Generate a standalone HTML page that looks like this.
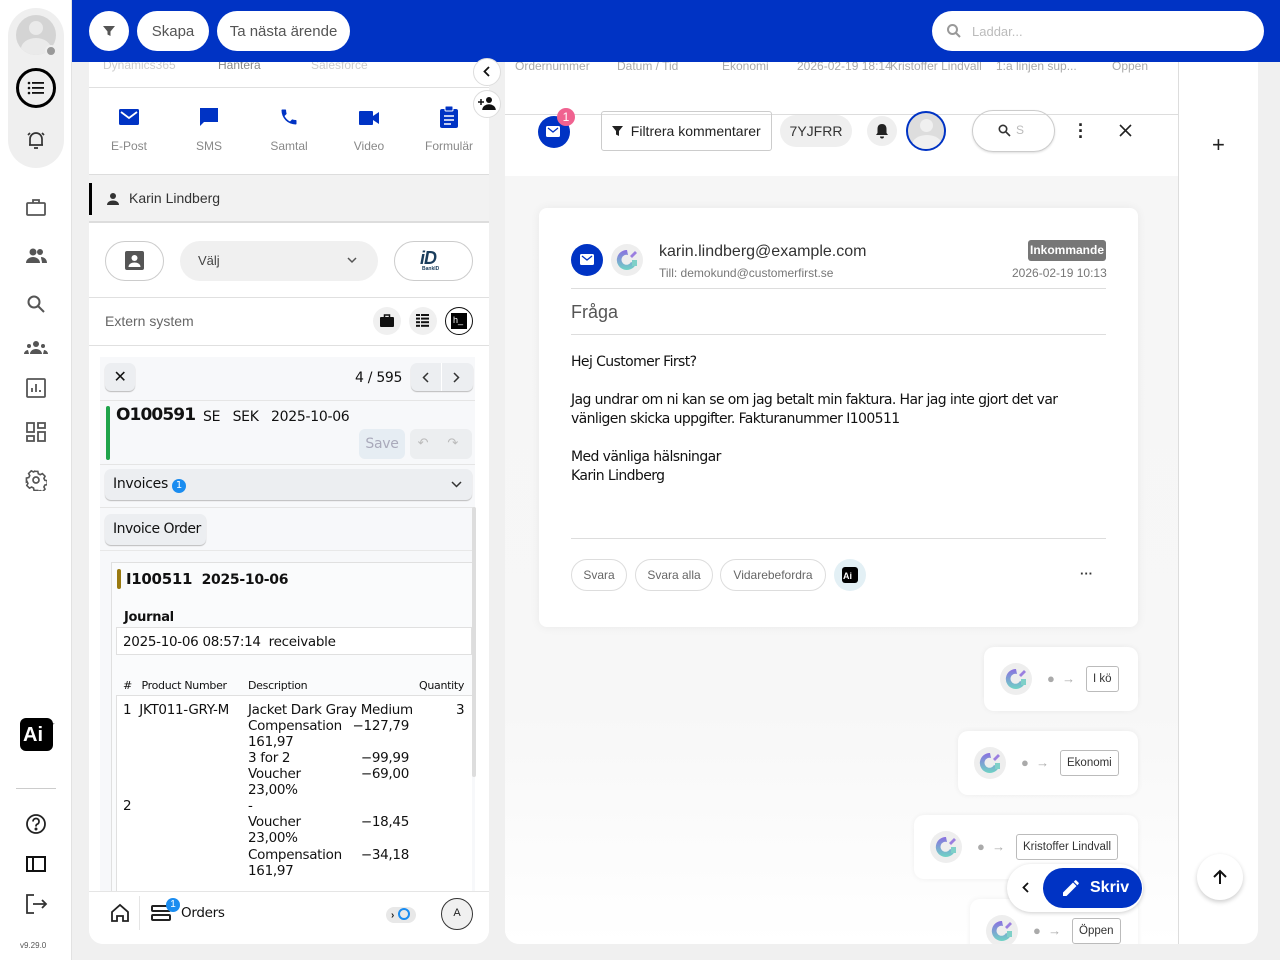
<!DOCTYPE html>
<html><head><meta charset="utf-8"><style>
*{box-sizing:border-box;margin:0;padding:0}
body{width:1280px;height:960px;overflow:hidden;background:#f0f0f0;font-family:"Liberation Sans",Arial,sans-serif;position:relative;color:#222}
.a{position:absolute}
.side{left:0;top:0;width:72px;height:960px;background:#fff;border-right:1px solid #e2e2e2}
.top{left:72px;top:0;width:1208px;height:62px;background:#0033c4}
.pill{position:absolute;background:#fff;border-radius:20px;height:40px;top:11px;display:flex;align-items:center;justify-content:center;font-size:15px;color:#555}
.lp{left:89px;top:62px;width:400px;height:882px;background:#fff;border-radius:0 0 14px 14px;overflow:hidden}
.mp{left:505px;top:62px;width:753px;height:882px;background:#fff;border-radius:0 0 14px 14px;overflow:hidden}
.lab{font-size:12px;color:#888;position:absolute;width:80px;text-align:center}
.mono{font-family:"DejaVu Sans",sans-serif;letter-spacing:-.3px}
.btn{position:absolute;background:#eceef1;border-radius:6px;box-shadow:0 1px 1px #bbb;white-space:nowrap}
.chip{position:absolute;border:1px solid #ddd;border-radius:18px;height:32px;display:flex;align-items:center;justify-content:center;font-size:12px;color:#666}
.ev{position:absolute;background:#fff;border-radius:10px;box-shadow:0 0 6px rgba(0,0,0,.06)}
.tag{position:absolute;border:1px solid #bbb;border-radius:3px;height:26px;font-size:11.5px;color:#333;display:flex;align-items:center;padding:0 6px;background:#fff}
.r{display:flex;justify-content:space-between;width:161px;height:16px;line-height:16px;white-space:nowrap}
</style></head><body>
<svg width="0" height="0" style="position:absolute"><defs>
<g id="cf"><path d="M16 6a10 10 0 1 0 9 14l-5-2a5 5 0 1 1-3-7z" fill="url(#gr)"/><path d="M19 12l5-5 2 2-5 5z" fill="#9b7fe0"/><path d="M21 16h5v6l-5 0z" fill="#7fd0c8"/></g>
<linearGradient id="gr" x1="0" y1="0" x2="0" y2="1"><stop offset="0" stop-color="#8a6fe0"/><stop offset="1" stop-color="#6fd3c5"/></linearGradient>
</defs></svg>

<div class="a side">
 <div class="a" style="left:8px;top:8px;width:56px;height:160px;background:#efefef;border-radius:28px"></div>
 <div class="a" style="left:16px;top:15px;width:40px;height:40px;border-radius:50%;background:#d4d4d4;overflow:hidden"><div class="a" style="left:13px;top:6px;width:14px;height:14px;border-radius:50%;background:#eaeaea"></div><div class="a" style="left:5px;top:23px;width:30px;height:22px;border-radius:50%;background:#eaeaea"></div></div>
 <div class="a" style="left:45px;top:45px;width:12px;height:12px;border-radius:50%;background:#999;border:2px solid #efefef"></div>
 <div class="a" style="left:16px;top:68px;width:40px;height:40px;border-radius:50%;border:3px solid #000"></div>
 <svg class="a" style="left:26px;top:78px" width="20" height="20" viewBox="0 0 20 20"><g fill="#111"><circle cx="3" cy="5" r="1.3"/><circle cx="3" cy="10" r="1.3"/><circle cx="3" cy="15" r="1.3"/><rect x="6" y="4" width="12" height="1.8"/><rect x="6" y="9" width="12" height="1.8"/><rect x="6" y="14" width="12" height="1.8"/></g></svg>
 <svg class="a" style="left:25px;top:129px" width="22" height="22" viewBox="0 0 22 22" fill="none" stroke="#333" stroke-width="1.7"><path d="M5 16V10a6 6 0 0 1 12 0v6H5zM4 16h14M9 19h4M3 6l2-2M19 6l-2-2"/></svg>
 <svg class="a" style="left:26px;top:198px" width="20" height="20" viewBox="0 0 20 20" fill="none" stroke="#555" stroke-width="1.8"><rect x="1" y="5" width="18" height="12" rx="1"/><path d="M7 5V2h6v3"/></svg>
 <svg class="a" style="left:25px;top:246px" width="22" height="20" viewBox="0 0 22 20" fill="#555"><circle cx="8" cy="6" r="3.5"/><circle cx="15" cy="6" r="3"/><path d="M1 17c0-4 4-6 7-6s7 2 7 6zM16 11c3 0 6 2 6 6h-5c0-2-1-4-1-6z"/></svg>
 <svg class="a" style="left:26px;top:294px" width="20" height="20" viewBox="0 0 20 20" fill="none" stroke="#555" stroke-width="2"><circle cx="8" cy="8" r="5.5"/><path d="M12 12l6 6"/></svg>
 <svg class="a" style="left:24px;top:339px" width="24" height="18" viewBox="0 0 24 18" fill="#555"><circle cx="12" cy="5" r="3"/><circle cx="5" cy="7" r="2"/><circle cx="19" cy="7" r="2"/><path d="M6 15c0-3 3-5 6-5s6 2 6 5zM0 15c0-2 2-4 4-4l1 4zM24 15c0-2-2-4-4-4l-1 4z"/></svg>
 <svg class="a" style="left:26px;top:378px" width="20" height="20" viewBox="0 0 20 20" fill="none" stroke="#555" stroke-width="1.8"><rect x="1" y="1" width="18" height="18" rx="1"/><path d="M6 14v-4M10 14V6M14 14v-2"/></svg>
 <svg class="a" style="left:26px;top:422px" width="20" height="20" viewBox="0 0 20 20" fill="none" stroke="#555" stroke-width="1.8"><rect x="1" y="1" width="7" height="9"/><rect x="12" y="1" width="7" height="5"/><rect x="1" y="14" width="7" height="5"/><rect x="12" y="10" width="7" height="9"/></svg>
 <svg class="a" style="left:25px;top:469px" width="22" height="22" viewBox="0 0 22 22" fill="none" stroke="#555" stroke-width="1.7"><circle cx="11" cy="11" r="3"/><path d="M9 2h4l.5 2.5 2 1 2.3-1.2 2.8 2.8-1.2 2.3 1 2 2.5.5v4l-2.5.5-1 2 1.2 2.3-2.8 2.8-2.3-1.2-2 1L13 22H9l-.5-2.5-2-1-2.3 1.2-2.8-2.8 1.2-2.3-1-2L1 13V9l2.5-.5 1-2-1.2-2.3 2.8-2.8 2.3 1.2 2-1z" transform="scale(.95) translate(.5 .5)"/></svg>
 <div class="a" style="left:20px;top:718px;width:33px;height:33px;background:#000;border-radius:6px;color:#fff;font-weight:bold;font-size:20px;padding:6px 0 0 3px">Ai</div>
 <div class="a" style="left:44px;top:716px;color:#000;font-size:14px">✦</div>
 <div class="a" style="left:16px;top:788px;width:40px;height:1px;background:#ccc"></div>
 <svg class="a" style="left:25px;top:813px" width="22" height="22" viewBox="0 0 22 22" fill="none" stroke="#222" stroke-width="1.8"><circle cx="11" cy="11" r="9"/><path d="M8 8.5a3 3 0 1 1 4 2.8c-1 .4-1 1-1 2.2"/><circle cx="11" cy="16" r=".6" fill="#222"/></svg>
 <svg class="a" style="left:26px;top:856px" width="20" height="16" viewBox="0 0 20 16" fill="none" stroke="#111" stroke-width="2"><rect x="1" y="1" width="18" height="14"/><path d="M7 1v14"/></svg>
 <svg class="a" style="left:26px;top:894px" width="22" height="20" viewBox="0 0 22 20" fill="none" stroke="#333" stroke-width="1.8"><path d="M8 1H1v18h7M7 10h13M16 6l4 4-4 4"/></svg>
 <div class="a" style="left:20px;top:941px;font-size:8px;color:#555">v9.29.0</div>
</div>

<div class="a top">
 <div class="pill" style="left:17px;width:40px;border-radius:50%"><svg width="14" height="14" viewBox="0 0 14 14"><path d="M1 2h12L8.5 7.5V12l-3-1.5V7.5z" fill="#555"/></svg></div>
 <div class="pill" style="left:65px;width:72px">Skapa</div>
 <div class="pill" style="left:145px;width:133px">Ta nästa ärende</div>
 <div class="pill" style="left:860px;width:332px;justify-content:flex-start;padding-left:14px;color:#bbb;font-size:13px"><svg width="16" height="16" viewBox="0 0 16 16" fill="none" stroke="#999" stroke-width="2"><circle cx="6.5" cy="6.5" r="4.5"/><path d="M10 10l4 4"/></svg><span style="margin-left:10px">Laddar...</span></div>
</div>

<div class="a lp">
 <div class="a" style="top:-4px;left:14px;font-size:12px;color:#ccc">Dynamics365</div>
 <div class="a" style="top:-4px;left:129px;font-size:12px;color:#888">Hantera</div>
 <div class="a" style="top:-4px;left:222px;font-size:12px;color:#ccc">Salesforce</div>
 <div class="a" style="top:25px;left:0;width:400px;height:1px;background:#e0e0e0"></div>
 <svg class="a" style="left:30px;top:47px" width="20" height="16" viewBox="0 0 20 16"><rect width="20" height="16" rx="1.5" fill="#0033c4"/><path d="M2 3l8 6 8-6" stroke="#fff" stroke-width="1.8" fill="none"/></svg>
 <svg class="a" style="left:110px;top:45px" width="20" height="20" viewBox="0 0 20 20"><path d="M1 1h18v14H5l-4 4z" fill="#0033c4"/></svg>
 <svg class="a" style="left:190px;top:45px" width="20" height="20" viewBox="0 0 24 24"><path d="M6.6 10.8a15 15 0 0 0 6.6 6.6l2.2-2.2c.3-.3.7-.4 1-.2 1.1.4 2.3.6 3.6.6.6 0 1 .4 1 1V20c0 .6-.4 1-1 1A17 17 0 0 1 3 4c0-.6.4-1 1-1h3.5c.6 0 1 .4 1 1 0 1.3.2 2.5.6 3.6.1.3 0 .7-.2 1z" fill="#0033c4"/></svg>
 <svg class="a" style="left:270px;top:49px" width="20" height="14" viewBox="0 0 20 14"><rect width="14" height="14" rx="1" fill="#0033c4"/><path d="M14 5l6-4v12l-6-4z" fill="#0033c4"/></svg>
 <svg class="a" style="left:351px;top:44px" width="18" height="22" viewBox="0 0 18 22"><rect y="3" width="18" height="19" rx="2" fill="#0033c4"/><rect x="5" y="0" width="8" height="5" rx="1" fill="#0033c4" stroke="#fff" stroke-width="1"/><path d="M4 10h10M4 14h10M4 18h7" stroke="#fff" stroke-width="1.6"/></svg>
 <div class="lab" style="left:0;top:77px">E-Post</div>
 <div class="lab" style="left:80px;top:77px">SMS</div>
 <div class="lab" style="left:160px;top:77px">Samtal</div>
 <div class="lab" style="left:240px;top:77px">Video</div>
 <div class="lab" style="left:320px;top:77px">Formulär</div>
 <div class="a" style="top:112px;left:0;width:400px;height:49px;background:#f2f2f2;border-top:1px solid #ddd;border-bottom:2px solid #ddd"></div>
 <div class="a" style="top:121px;left:0;width:3px;height:32px;background:#000"></div>
 <svg class="a" style="left:18px;top:131px" width="12" height="12" viewBox="0 0 12 12" fill="#333"><circle cx="6" cy="3" r="3"/><path d="M0 12c0-3 3-4.5 6-4.5s6 1.5 6 4.5z"/></svg>
 <div class="a" style="left:40px;top:128px;font-size:14px;color:#333">Karin Lindberg</div>
 <div class="a" style="left:16px;top:179px;width:59px;height:40px;border:1px solid #ccc;border-radius:20px"></div>
 <svg class="a" style="left:36px;top:189px" width="19" height="19" viewBox="0 0 19 19"><rect width="19" height="19" rx="2" fill="#555"/><circle cx="9.5" cy="7" r="3" fill="#fff"/><path d="M3.5 16c0-3 3-4.5 6-4.5s6 1.5 6 4.5z" fill="#fff"/></svg>
 <div class="a" style="left:91px;top:179px;width:198px;height:40px;background:#f0f0f0;border-radius:20px;font-size:13px;color:#444;padding:12px 0 0 18px">Välj</div>
 <svg class="a" style="left:258px;top:195px" width="10" height="7" viewBox="0 0 10 7" fill="none" stroke="#555" stroke-width="1.5"><path d="M1 1l4 4 4-4"/></svg>
 <div class="a" style="left:305px;top:179px;width:79px;height:40px;border:1px solid #ccc;border-radius:20px"></div>
 <div class="a" style="left:331px;top:186px;font-size:18px;font-weight:bold;font-style:italic;color:#1a3d5c;letter-spacing:-1px">iD</div>
 <div class="a" style="left:333px;top:204px;font-size:5px;font-weight:bold;color:#1a3d5c">BankID</div>
 <div class="a" style="top:235px;left:0;width:400px;height:1px;background:#e0e0e0"></div>
 <div class="a" style="left:16px;top:251px;font-size:14px;color:#666">Extern system</div>
 <div class="a" style="left:284px;top:245px;width:28px;height:28px;border-radius:50%;background:#f0f0f0"></div>
 <svg class="a" style="left:291px;top:252px" width="14" height="13" viewBox="0 0 14 13"><rect y="3" width="14" height="10" rx="1" fill="#111"/><path d="M4.5 3V1h5v2" stroke="#111" stroke-width="1.5" fill="none"/></svg>
 <div class="a" style="left:320px;top:245px;width:28px;height:28px;border-radius:50%;background:#f0f0f0"></div>
 <svg class="a" style="left:327px;top:252px" width="13" height="13" viewBox="0 0 13 13" fill="#111"><rect x="0" y="0" width="4" height="2"/><rect x="5" y="0" width="8" height="2"/><rect x="0" y="3.6" width="4" height="2"/><rect x="5" y="3.6" width="8" height="2"/><rect x="0" y="7.2" width="4" height="2"/><rect x="5" y="7.2" width="8" height="2"/><rect x="0" y="10.8" width="4" height="2"/><rect x="5" y="10.8" width="8" height="2"/></svg>
 <div class="a" style="left:356px;top:245px;width:28px;height:28px;border-radius:50%;border:1.5px solid #111"></div>
 <div class="a" style="left:362px;top:251px;width:16px;height:16px;background:#000;color:#fff;font-size:9px;padding:2px 0 0 2px">h_</div>
 <div class="a" style="top:283px;left:0;width:400px;height:1px;background:#e0e0e0"></div>

 <div class="a mono" style="left:11px;top:295px;width:375px;height:587px;background:#f7f8fa;font-size:13px;color:#111">
  <div class="btn" style="left:5px;top:6px;width:30px;height:28px;font-size:16px;text-align:center;line-height:27px">✕</div>
  <div class="a" style="left:255px;top:13px;font-size:14px">4 / 595</div>
  <div class="btn" style="left:311px;top:6px;width:62px;height:28px"></div>
  <div class="a" style="left:341px;top:6px;width:1px;height:28px;background:#fff"></div>
  <svg class="a" style="left:322px;top:15px" width="7" height="11" viewBox="0 0 7 11" fill="none" stroke="#333" stroke-width="1.5"><path d="M6 1L1.5 5.5 6 10"/></svg>
  <svg class="a" style="left:353px;top:15px" width="7" height="11" viewBox="0 0 7 11" fill="none" stroke="#333" stroke-width="1.5"><path d="M1 1l4.5 4.5L1 10"/></svg>
  <div class="a" style="left:0;top:43px;width:375px;height:1px;background:#e5e5e5"></div>
  <div class="a" style="left:6px;top:49px;width:4px;height:54px;background:#1ea34a;border-radius:2px"></div>
  <div class="a" style="left:16px;top:48px;font-size:17px;font-weight:bold;letter-spacing:-.9px">O100591</div>
  <div class="a" style="left:103px;top:52px;font-size:14px;white-space:pre">SE   SEK   2025-10-06</div>
  <div class="a" style="left:259px;top:72px;width:46px;height:30px;background:#e6edf3;border-radius:6px;color:#aab;font-size:14px;text-align:center;line-height:30px">Save</div>
  <div class="btn" style="left:310px;top:72px;width:62px;height:30px;box-shadow:none;background:#eceef0;color:#bbb;font-size:13px;line-height:30px">&nbsp;&nbsp;↶&nbsp;&nbsp;&nbsp;&nbsp;&nbsp;↷</div>
  <div class="a" style="left:0;top:107px;width:375px;height:1px;background:#e5e5e5"></div>
  <div class="btn" style="left:5px;top:112px;width:367px;height:31px;font-size:14px;padding:7px 8px">Invoices <span style="display:inline-block;width:14px;height:14px;border-radius:50%;background:#1a8cf0;color:#fff;font-size:10px;text-align:center;line-height:14px;letter-spacing:0">1</span></div>
  <svg class="a" style="left:351px;top:124px" width="11" height="7" viewBox="0 0 11 7" fill="none" stroke="#333" stroke-width="1.5"><path d="M1 1l4.5 4.5L10 1"/></svg>
  <div class="a" style="left:0;top:150px;width:375px;height:1px;background:#e5e5e5"></div>
  <div class="btn" style="left:5px;top:157px;width:101px;height:31px;font-size:14px;padding:7px 8px;letter-spacing:-.5px">Invoice Order</div>
  <div class="a" style="left:0;top:193px;width:375px;height:1px;background:#e8e8e8"></div>
  <div class="a" style="left:372px;top:150px;width:4px;height:270px;background:#ddd;border-radius:2px"></div>
  <div class="a" style="left:11px;top:205px;width:361px;height:382px;border:1px solid #e0e0e0;border-right:none;background:#fafbfc"></div>
  <div class="a" style="left:17px;top:212px;width:4px;height:20px;background:#9a7a10;border-radius:2px"></div>
  <div class="a" style="left:26px;top:213px;font-size:15px;font-weight:bold">I100511 <span style="font-size:14px">&nbsp;2025-10-06</span></div>
  <div class="a" style="left:24px;top:253px;font-size:13px;font-weight:bold">Journal</div>
  <div class="a" style="left:16px;top:270px;width:356px;height:28px;border:1px solid #e0e0e0;background:#fff;font-size:13.5px;padding:6px 6px;white-space:pre">2025-10-06 08:57:14  receivable</div>
  <div class="a" style="left:23px;top:322px;font-size:11px">#&nbsp;&nbsp;&nbsp;Product Number</div>
  <div class="a" style="left:148px;top:322px;font-size:11px">Description</div>
  <div class="a" style="left:319px;top:322px;font-size:11px">Quantity</div>
  <div class="a" style="left:16px;top:338px;width:356px;height:244px;border:1px solid #e0e0e0;border-right:none;background:#fff"></div>
  <div class="a" style="left:23px;top:345px;font-size:13.5px;line-height:16px;white-space:pre">1  JKT011-GRY-M</div>
  <div class="a" style="left:23px;top:441px;font-size:13.5px;line-height:16px">2</div>
  <div class="a" style="left:148px;top:345px;font-size:13.5px">
   <div class="r"><span>Jacket Dark Gray Medium</span></div>
   <div class="r"><span>Compensation</span><span>−127,79</span></div>
   <div class="r"><span>161,97</span></div>
   <div class="r"><span>3 for 2</span><span>−99,99</span></div>
   <div class="r"><span>Voucher</span><span>−69,00</span></div>
   <div class="r"><span>23,00%</span></div>
   <div class="r"><span>-</span></div>
   <div class="r"><span>Voucher</span><span>−18,45</span></div>
   <div class="r"><span>23,00%</span></div>
   <div class="r" style="margin-top:1px"><span>Compensation</span><span>−34,18</span></div>
   <div class="r"><span>161,97</span></div>
  </div>
  <div class="a" style="left:356px;top:345px;font-size:13.5px">3</div>
  <div class="a" style="left:0;top:589px;width:270px;height:5px;background:#ddd;border-radius:3px"></div>
 </div>
 <div class="a" style="left:0;top:829px;width:400px;height:53px;background:#fff;border-top:1px solid #e5e5e5"></div>
 <div class="a" style="left:50px;top:834px;width:1px;height:34px;background:#e5e5e5"></div>
 <svg class="a" style="left:21px;top:841px" width="20" height="20" viewBox="0 0 20 20" fill="none" stroke="#222" stroke-width="1.8"><path d="M2 9l8-7 8 7v9h-5v-5H7v5H2z"/></svg>
 <svg class="a" style="left:62px;top:842px" width="20" height="18" viewBox="0 0 20 18" fill="none" stroke="#222" stroke-width="2"><rect x="1" y="2" width="18" height="5" rx="1"/><rect x="1" y="11" width="18" height="5" rx="1"/></svg>
 <div class="a" style="left:77px;top:836px;width:14px;height:14px;border-radius:50%;background:#1a8cf0;color:#fff;font-size:10px;text-align:center;line-height:14px">1</div>
 <div class="a mono" style="left:92px;top:843px;font-size:13.5px;color:#111">Orders</div>
 <div class="a" style="left:297px;top:845px;width:30px;height:16px;border-radius:8px;background:#e8e8e8;font-size:10px;padding:1px 0 0 5px;font-weight:bold">›<span style="display:inline-block;width:12px;height:12px;border-radius:50%;border:2px solid #1a8cf0;margin-left:4px;vertical-align:-2px"></span></div>
 <div class="a" style="left:352px;top:836px;width:32px;height:32px;border-radius:50%;border:1.5px solid #333;background:#f0f0f0;font-size:11px;text-align:center;line-height:29px">A</div>
</div>
<div class="a" style="left:473px;top:58px;width:28px;height:28px;border-radius:50%;background:#fff;border:1px solid #ddd"></div>
<svg class="a" style="left:483px;top:66px" width="7" height="11" viewBox="0 0 7 11" fill="none" stroke="#111" stroke-width="1.8"><path d="M6 1L1.5 5.5 6 10"/></svg>
<div class="a" style="left:473px;top:90px;width:28px;height:28px;border-radius:50%;background:#fff;border:1px solid #ddd"></div>
<svg class="a" style="left:478px;top:96px" width="18" height="14" viewBox="0 0 18 14" fill="#111"><circle cx="11" cy="4" r="3"/><path d="M5 14c0-3 3-5 6-5s6 2 6 5zM0 6h6M3 3v6" stroke="#111" stroke-width="1.5"/></svg>

<div class="a mp">
 <div class="a" style="left:0;top:0;width:673px;height:53px;border-bottom:1px solid #ddd;font-size:12px;color:#aaa">
  <div class="a" style="left:10px;top:-3px">Ordernummer</div><div class="a" style="left:112px;top:-3px">Datum / Tid</div><div class="a" style="left:217px;top:-3px">Ekonomi</div><div class="a" style="left:292px;top:-3px">2026-02-19 18:14</div><div class="a" style="left:385px;top:-3px">Kristoffer Lindvall</div><div class="a" style="left:491px;top:-3px">1:a linjen sup...</div><div class="a" style="left:607px;top:-3px">Öppen</div>
 </div>
 <div class="a" style="left:673px;top:0;width:1px;height:882px;background:#ddd"></div>
 <div class="a" style="left:707px;top:70px;font-size:22px;color:#222">+</div>
 <div class="a" style="left:0;top:114px;width:673px;height:768px;background:linear-gradient(#f6f6f6,#f7f7f7 70%,#fff)"></div>
 <div class="a" style="left:33px;top:54px;width:32px;height:32px;border-radius:50%;background:#0033c4"></div>
 <svg class="a" style="left:41px;top:64px" width="14" height="11" viewBox="0 0 14 11"><rect width="14" height="11" rx="1.5" fill="#fff"/><path d="M2 2l5 4 5-4" stroke="#0033c4" stroke-width="1.3" fill="none"/></svg>
 <div class="a" style="left:52px;top:46px;width:18px;height:18px;border-radius:50%;background:#f06290;color:#fff;font-size:12px;text-align:center;line-height:18px">1</div>
 <div class="a" style="left:96px;top:49px;width:171px;height:40px;border:1px solid #ccc;border-radius:3px;font-size:14px;color:#222;padding:11px 0 0 10px"><svg width="11" height="11" viewBox="0 0 11 11" style="vertical-align:-1px"><path d="M0 0h11L7 5v5L4 8.5V5z" fill="#222"/></svg>&nbsp; Filtrera kommentarer</div>
 <div class="a" style="left:275px;top:53px;width:72px;height:32px;border-radius:16px;background:#efefef;font-size:14px;color:#333;text-align:center;line-height:32px">7YJFRR</div>
 <div class="a" style="left:362px;top:54px;width:30px;height:30px;border-radius:50%;background:#efefef"></div>
 <svg class="a" style="left:370px;top:61px" width="14" height="16" viewBox="0 0 14 16" fill="#222"><path d="M7 1c3 0 4.5 2 4.5 5v4l1.5 2H1l1.5-2V6C2.5 3 4 1 7 1zM5 13.5h4a2 2 0 0 1-4 0z"/></svg>
 <div class="a" style="left:401px;top:49px;width:40px;height:40px;border-radius:50%;border:2px solid #0033c4;background:#ddd;overflow:hidden"><div class="a" style="left:12px;top:6px;width:13px;height:13px;border-radius:50%;background:#f0f0f0"></div><div class="a" style="left:4px;top:22px;width:30px;height:20px;border-radius:50%;background:#f0f0f0"></div></div>
 <div class="a" style="left:467px;top:48px;width:83px;height:42px;border-radius:21px;border:1px solid #ccc;box-shadow:0 1px 2px #ddd"></div>
 <svg class="a" style="left:493px;top:62px" width="13" height="13" viewBox="0 0 13 13" fill="none" stroke="#333" stroke-width="1.6"><circle cx="5" cy="5" r="3.7"/><path d="M8 8l4 4"/></svg>
 <div class="a" style="left:511px;top:61px;font-size:12px;color:#bbb">S</div>
 <div class="a" style="left:573px;top:60px;font-size:18px;font-weight:bold;line-height:6px;color:#222">·<br>·<br>·</div>
 <svg class="a" style="left:614px;top:62px" width="13" height="13" viewBox="0 0 13 13" stroke="#222" stroke-width="1.6"><path d="M1 1l11 11M12 1L1 12"/></svg>

 <div class="a" style="left:34px;top:146px;width:599px;height:419px;background:#fff;border-radius:8px;box-shadow:0 0 10px rgba(0,0,0,.06)">
  <div class="a" style="left:32px;top:36px;width:32px;height:32px;border-radius:50%;background:#0033c4"></div>
  <svg class="a" style="left:41px;top:46px" width="14" height="11" viewBox="0 0 14 11"><rect width="14" height="11" rx="1.5" fill="#fff"/><path d="M2 2l5 4 5-4" stroke="#0033c4" stroke-width="1.3" fill="none"/></svg>
  <svg class="a" style="left:72px;top:36px" width="32" height="32" viewBox="0 0 32 32"><circle cx="16" cy="16" r="16" fill="#eee"/><use href="#cf"/></svg>
  <div class="a" style="left:120px;top:35px;font-size:16px;color:#333">karin.lindberg@example.com</div>
  <div class="a" style="left:120px;top:58px;font-size:12px;color:#777">Till: demokund@customerfirst.se</div>
  <div class="a" style="left:489px;top:32px;width:78px;height:21px;background:#777;border-radius:3px;color:#fff;font-size:12px;font-weight:bold;text-align:center;line-height:21px">Inkommande</div>
  <div class="a" style="left:473px;top:58px;font-size:12px;color:#777">2026-02-19 10:13</div>
  <div class="a" style="left:32px;top:80px;width:535px;height:1px;background:#ddd"></div>
  <div class="a" style="left:32px;top:94px;font-size:18px;color:#555">Fråga</div>
  <div class="a" style="left:32px;top:126px;width:535px;height:1px;background:#ddd"></div>
  <div class="a" style="left:32px;top:145px;font-size:14px;color:#111;line-height:19px;font-family:'DejaVu Sans',sans-serif;letter-spacing:-.6px">Hej Customer First?<br><br>Jag undrar om ni kan se om jag betalt min faktura. Har jag inte gjort det var<br>vänligen skicka uppgifter. Fakturanummer I100511<br><br>Med vänliga hälsningar<br>Karin Lindberg</div>
  <div class="a" style="left:32px;top:330px;width:535px;height:1px;background:#ddd"></div>
  <div class="chip" style="left:32px;top:351px;width:56px">Svara</div>
  <div class="chip" style="left:96px;top:351px;width:78px">Svara alla</div>
  <div class="chip" style="left:181px;top:351px;width:106px">Vidarebefordra</div>
  <div class="a" style="left:295px;top:351px;width:32px;height:32px;border-radius:50%;background:#e3f0f5"></div>
  <div class="a" style="left:303px;top:359px;width:16px;height:16px;background:#000;border-radius:3px;color:#fff;font-size:9px;font-weight:bold;padding:4px 0 0 1px">Ai</div>
  <div class="a" style="left:541px;top:358px;font-size:13px;font-weight:bold;color:#333">···</div>
 </div>

 <div class="ev" style="left:479px;top:585px;width:154px;height:64px"></div>
 <svg class="a" style="left:495px;top:601px" width="32" height="32" viewBox="0 0 32 32"><circle cx="16" cy="16" r="16" fill="#eee"/><use href="#cf"/></svg>
 <div class="a" style="left:542px;top:609px;font-size:13px;color:#aaa">●&nbsp; →</div>
 <div class="tag" style="left:581px;top:604px">I kö</div>
 <div class="ev" style="left:453px;top:669px;width:180px;height:64px"></div>
 <svg class="a" style="left:469px;top:685px" width="32" height="32" viewBox="0 0 32 32"><circle cx="16" cy="16" r="16" fill="#eee"/><use href="#cf"/></svg>
 <div class="a" style="left:516px;top:693px;font-size:13px;color:#aaa">●&nbsp; →</div>
 <div class="tag" style="left:555px;top:688px">Ekonomi</div>
 <div class="ev" style="left:409px;top:753px;width:224px;height:64px"></div>
 <svg class="a" style="left:425px;top:769px" width="32" height="32" viewBox="0 0 32 32"><circle cx="16" cy="16" r="16" fill="#eee"/><use href="#cf"/></svg>
 <div class="a" style="left:472px;top:777px;font-size:13px;color:#aaa">●&nbsp; →</div>
 <div class="tag" style="left:511px;top:772px">Kristoffer Lindvall</div>
 <div class="ev" style="left:465px;top:837px;width:168px;height:60px"></div>
 <svg class="a" style="left:481px;top:853px" width="32" height="32" viewBox="0 0 32 32"><circle cx="16" cy="16" r="16" fill="#eee"/><use href="#cf"/></svg>
 <div class="a" style="left:528px;top:861px;font-size:13px;color:#aaa">●&nbsp; →</div>
 <div class="tag" style="left:567px;top:856px">Öppen</div>

 <div class="a" style="left:502px;top:802px;width:136px;height:48px;border-radius:24px;background:#fff;box-shadow:0 1px 4px rgba(0,0,0,.2)"></div>
 <svg class="a" style="left:517px;top:820px" width="7" height="11" viewBox="0 0 7 11" fill="none" stroke="#111" stroke-width="1.8"><path d="M6 1L1.5 5.5 6 10"/></svg>
 <div class="a" style="left:538px;top:806px;width:99px;height:40px;border-radius:20px;background:#0033c4;color:#fff;font-size:16px;font-weight:bold;padding:11px 0 0 47px">Skriv</div>
 <svg class="a" style="left:557px;top:817px" width="18" height="18" viewBox="0 0 18 18" fill="#fff"><path d="M1 13.5V17h3.5L14.5 7 11 3.5zM16.5 5a1 1 0 0 0 0-1.4L14.4 1.5a1 1 0 0 0-1.4 0L11.8 2.7l3.5 3.5z"/></svg>
 <div class="a" style="left:692px;top:792px;width:46px;height:46px;border-radius:50%;background:#fff;box-shadow:0 2px 5px rgba(0,0,0,.2)"></div>
 <svg class="a" style="left:707px;top:807px" width="16" height="16" viewBox="0 0 16 16" fill="none" stroke="#111" stroke-width="2"><path d="M8 15V2M2 8l6-6 6 6"/></svg>
</div>
</body></html>
